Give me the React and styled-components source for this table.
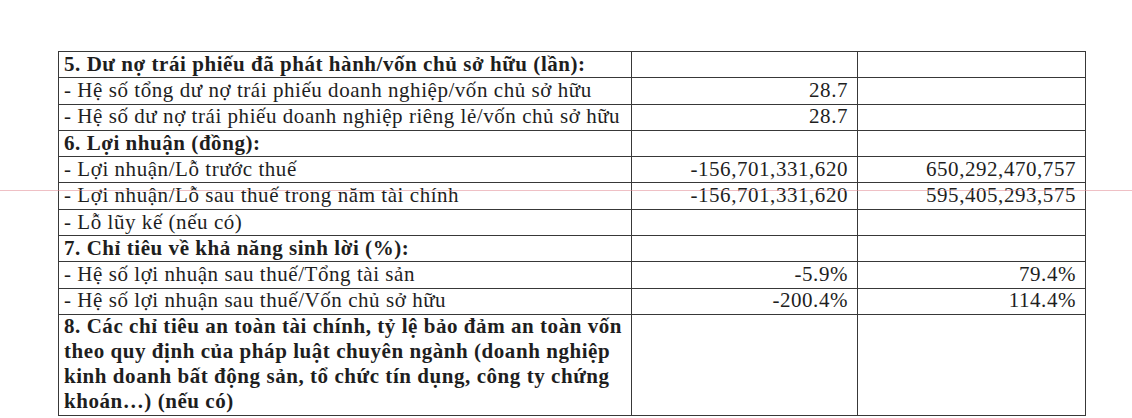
import React from "react";
import styled, { createGlobalStyle } from "styled-components";

const Global = createGlobalStyle`
  html, body { margin: 0; padding: 0; background: #ffffff; }
  body { font-family: "Liberation Serif", "Times New Roman", serif; color: #1c1c1c; }
`;

const Page = styled.div`
  position: relative;
  width: 1132px;
  height: 418px;
  overflow: hidden;
  padding: 51px 0 0 58px;
  box-sizing: border-box;
  background: #ffffff;
`;

const ScanLine = styled.div`
  position: absolute;
  left: 0;
  right: 0;
  top: ${(p) => p.$top}px;
  height: 1px;
  background: ${(p) => p.$color};
  pointer-events: none;
`;

const Table = styled.table`
  border-collapse: collapse;
  table-layout: fixed;
  width: 1027px;
`;

const Row = styled.tr`
  height: ${(p) => p.$h || 26.3}px;
`;

const Cell = styled.td`
  font-family: "Liberation Serif", "Times New Roman", serif;
  font-size: 21px;
  letter-spacing: 0.55px;
  color: #1e1e1e;
  border: 1px solid #383838;
  padding: ${(p) => (p.$align === "right" ? "0 9px 0 4px" : "0 4px 0 5px")};
  padding-bottom: ${(p) => (p.$tall ? "0" : "2.5px")};
  text-align: ${(p) => p.$align || "left"};
  font-weight: ${(p) => (p.$bold ? 700 : 400)};
  line-height: 22px;
  vertical-align: ${(p) => (p.$tall ? "top" : "bottom")};
  white-space: ${(p) => (p.$tall ? "normal" : "nowrap")};
`;

const TallText = styled.div`
  line-height: 25px;
  margin-top: -1px;
`;

const rows = [
  { label: "5. Dư nợ trái phiếu đã phát hành/vốn chủ sở hữu (lần):", bold: true },
  { label: "- Hệ số tổng dư nợ trái phiếu doanh nghiệp/vốn chủ sở hữu", a: "28.7" },
  { label: "- Hệ số dư nợ trái phiếu doanh nghiệp riêng lẻ/vốn chủ sở hữu", a: "28.7" },
  { label: "6. Lợi nhuận (đồng):", bold: true },
  { label: "- Lợi nhuận/Lỗ trước thuế", a: "-156,701,331,620", b: "650,292,470,757" },
  { label: "- Lợi nhuận/Lỗ sau thuế trong năm tài chính", a: "-156,701,331,620", b: "595,405,293,575" },
  { label: "- Lỗ lũy kế (nếu có)" },
  { label: "7. Chỉ tiêu về khả năng sinh lời (%):", bold: true },
  { label: "- Hệ số lợi nhuận sau thuế/Tổng tài sản", a: "-5.9%", b: "79.4%" },
  { label: "- Hệ số lợi nhuận sau thuế/Vốn chủ sở hữu", a: "-200.4%", b: "114.4%" },
];

export default function App() {
  return (
    <>
      <Global />
      <Page>
        <Table>
          <colgroup>
            <col style={{ width: 573 }} />
            <col style={{ width: 226 }} />
            <col style={{ width: 228 }} />
          </colgroup>
          <tbody>
            {rows.map((r, i) => (
              <Row key={i}>
                <Cell $bold={r.bold}>{r.label}</Cell>
                <Cell $align="right">{r.a || ""}</Cell>
                <Cell $align="right">{r.b || ""}</Cell>
              </Row>
            ))}
            <Row $h={101}>
              <Cell $bold $tall>
                <TallText>
                  8. Các chỉ tiêu an toàn tài chính, tỷ lệ bảo đảm an toàn vốn theo quy định của pháp luật chuyên ngành (doanh nghiệp kinh doanh bất động sản, tổ chức tín dụng, công ty chứng khoán…) (nếu có)
                </TallText>
              </Cell>
              <Cell $align="right" $tall />
              <Cell $align="right" $tall />
            </Row>
          </tbody>
        </Table>
        <ScanLine $top={190} $color="rgba(225, 140, 150, 0.55)" />
      </Page>
    </>
  );
}
